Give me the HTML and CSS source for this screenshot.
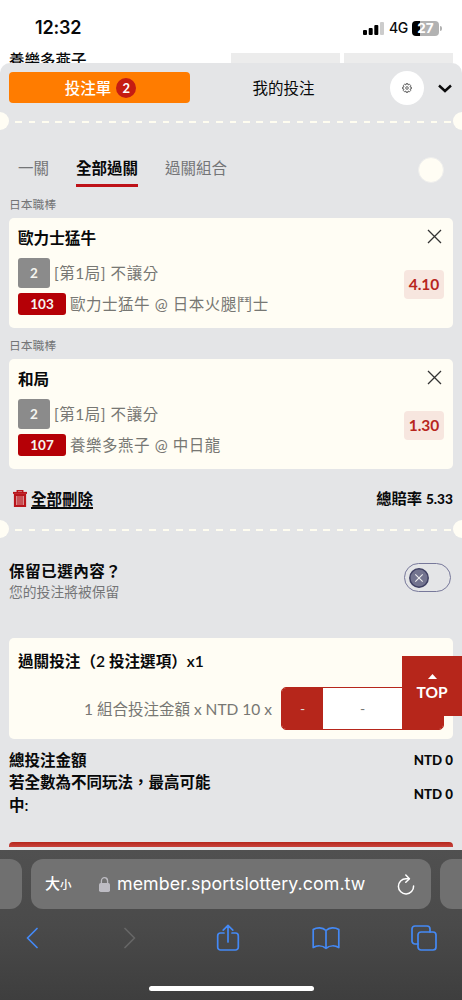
FILE: index.html
```html
<!DOCTYPE html>
<html lang="zh-Hant">
<head>
<meta charset="utf-8">
<meta name="viewport" content="width=device-width, initial-scale=1">
<title>投注單</title>
<link rel="stylesheet" href="styles.css">
</head>
<body>
<header class="status">
  <span class="time">12:32</span>
  <div class="signals">
    <svg class="bars" width="21" height="13" viewBox="0 0 21 13"><rect x="0" y="8" width="4" height="5" rx="1"/><rect x="5.7" y="6" width="4" height="7" rx="1"/><rect x="11.3" y="3" width="4" height="10" rx="1"/><rect class="dim" x="17" y="0" width="4" height="13" rx="1"/></svg>
    <span class="network">4G</span>
    <span class="battery">27</span><i class="battery-tip"></i>
  </div>
</header>
<div class="behind"><span class="behind-team">養樂多燕子</span><i class="behind-odds"></i><i class="behind-odds"></i></div>
<main class="sheet">
  <nav class="head">
    <div class="slip">投注單<b class="count">2</b></div>
    <div class="mine">我的投注</div>
    <div class="gear"><svg width="10" height="10" viewBox="0 0 20 20" fill="none" stroke="#555" stroke-width="1.8"><path d="M8 4 8.500 1h3L12 4l3-1.500 2.300 2.300L16 8l3 .5v3l-3 .5 1.300 3.200L15 17.500 12 16l-.5 3h-3L8 16l-3 1.500-2.300-2.300L4 12l-3-.5v-3L4 8 2.700 4.800 5 2.500z"/><circle cx="10" cy="10" r="2.600"/></svg></div>
    <svg class="chevron" width="14" height="9" viewBox="0 0 14 9" fill="none" stroke="#0b0b0c" stroke-width="2.4"><path d="M1 1.5 7 7l6-5.5"/></svg>
  </nav>
  <div class="tear"><i class="notch"></i><i class="dashes"></i><i class="notch"></i></div>
  <nav class="tabs"><span class="tab">一關</span><span class="tab active">全部過關</span><span class="tab">過關組合</span><i class="dot"></i></nav>
  <section class="pick">
    <h2 class="league">日本職棒</h2>
    <div class="card">
      <div class="pick-top"><h3 class="title">歐力士猛牛</h3><svg class="close" width="15" height="15" viewBox="0 0 15 15"><path d="m1 1 13 13M14 1 1 14"/></svg></div>
      <div class="pick-body">
        <div class="details"><p class="market"><b class="leg">2</b>[第1局] 不讓分</p><p class="match"><b class="code">103</b>歐力士猛牛 @ 日本火腿鬥士</p></div>
        <strong class="odds">4.10</strong>
      </div>
    </div>
  </section>
  <section class="pick">
    <h2 class="league">日本職棒</h2>
    <div class="card">
      <div class="pick-top"><h3 class="title">和局</h3><svg class="close" width="15" height="15" viewBox="0 0 15 15"><path d="m1 1 13 13M14 1 1 14"/></svg></div>
      <div class="pick-body">
        <div class="details"><p class="market"><b class="leg">2</b>[第1局] 不讓分</p><p class="match"><b class="code">107</b>養樂多燕子 @ 中日龍</p></div>
        <strong class="odds">1.30</strong>
      </div>
    </div>
  </section>
  <div class="summary">
    <svg width="14" height="17" viewBox="0 0 14 17" fill="none" stroke="#b9151b"><path d="M0 2.900h14" stroke-width="2"/><path d="M4.300 2.500V.8h5.400v1.700" stroke-width="1.500"/><path d="M2 5v11h10V5z" stroke-width="2.200" fill="#dc9a9c"/><path d="M5 6v9M7 6v9M9 6v9" stroke-width="1.100"/></svg>
    <a class="clear">全部刪除</a><span class="total-odds">總賠率 <b class="rate">5.33</b></span>
  </div>
  <div class="tear"><i class="notch"></i><i class="dashes"></i><i class="notch"></i></div>
  <section class="keep">
    <div class="keep-text"><h3 class="keep-title">保留已選內容？</h3><p class="keep-note">您的投注將被保留</p></div>
    <div class="switch"><svg class="knob" width="20" height="20" viewBox="0 0 20 20"><circle cx="10" cy="10" r="9.2" fill="#73748f" stroke="#3f4063" stroke-width="1.5"/><path d="m6.3 6.3 7.4 7.4m0-7.4-7.4 7.4" stroke="#eee" stroke-width="1.1"/></svg></div>
  </section>
  <section class="stake">
    <h3 class="stake-title">過關投注（2 投注選項）x1</h3>
    <div class="stake-row"><span class="formula">1 組合投注金額 x NTD 10 x</span><div class="stepper"><span class="minus">-</span><span class="amount">-</span><span class="plus"></span></div></div>
    <div class="to-top"><svg width="9" height="5" viewBox="0 0 9 5"><path d="M4.5 0 9 5H0z" fill="#fff"/></svg>TOP</div>
  </section>
  <div class="totals">
    <div class="total"><span>總投注金額</span><b class="money">NTD 0</b></div>
    <div class="total"><span class="maximum">若全數為不同玩法，最高可能中:</span><b class="money">NTD 0</b></div>
  </div>
  <div class="submit"></div>
</main>
<footer class="browser">
  <div class="address-row">
    <i class="side-tab left"></i>
    <div class="address"><span class="size">大<small class="small">小</small></span>
      <svg class="lock" width="11" height="15" viewBox="0 0 11 15"><path d="M2.4 7V4.2a3.1 3.5 0 0 1 6.2 0V7" fill="none" stroke="#bdbcc3" stroke-width="1.3"/><rect y="6" width="11" height="9" rx="1.7" fill="#bdbcc3"/></svg>
      <span class="url">member.sportslottery.com.tw</span>
      <svg class="reload" width="18" height="21" viewBox="0 0 18 21" fill="none" stroke="#fff" stroke-width="1.5" stroke-linecap="round" stroke-linejoin="round"><path d="M12 4.700H9A7.600 7.600 0 1 0 16.600 12"/><path d="m8.800 1 3.600 3.700-3.600 3.600"/></svg>
    </div>
    <i class="side-tab right"></i>
  </div>
  <nav class="tools">
    <svg width="12" height="22" viewBox="0 0 12 22"><path d="M11 1.5 1.5 11l9.5 9.5"/></svg>
    <svg class="disabled" width="12" height="22" viewBox="0 0 12 22"><path d="m1 1.5 9.5 9.5L1 20.5"/></svg>
    <svg width="24" height="28" viewBox="0 0 24 28"><path d="M8 9H4.5A2.8 2.8 0 0 0 1.7 11.8v11.4A2.8 2.8 0 0 0 4.5 26h15a2.8 2.8 0 0 0 2.8-2.8V11.8A2.8 2.8 0 0 0 19.5 9H16M12 18V1.5M7.2 6.2 12 1.4l4.8 4.8"/></svg>
    <svg width="28" height="24" viewBox="0 0 28 24"><path d="M14 4.500C10.500 1.200 5 1.200 1.200 3.500v18c4-2.300 9.300-2 12.800.8 3.500-2.800 8.800-3.100 12.800-.8v-18C23 1.200 17.500 1.200 14 4.500zv17.800"/></svg>
    <svg width="26" height="26" viewBox="0 0 26 26"><rect x="7" y="7" width="18" height="18" rx="3"/><path d="M7 19H4a3 3 0 0 1-3-3V4a3 3 0 0 1 3-3h12a3 3 0 0 1 3 3v3"/></svg>
  </nav>
  <i class="home"></i>
</footer>
</body>
</html>
```
FILE: styles.css
```css
* { box-sizing: border-box; }
body { margin: 0; width: 462px; height: 1000px; overflow: hidden; background: #fff; color: #08090a; font: 15.5px/22px Lato, "Noto Sans CJK TC", sans-serif; display: flex; flex-direction: column; }
h2, h3, p { margin: 0; }
i { display: block; }
svg { flex: none; display: block; }
.status { flex: none; height: 48px; padding: 8px 20px 0 35px; display: flex; align-items: center; justify-content: space-between; font-family: Inter, sans-serif; }
.time { font-size: 18px; font-weight: 600; letter-spacing: -.2px; }
.signals { display: flex; align-items: center; }
.bars { margin-right: 5px; }
.bars .dim { fill: #ccc; }
.network { font-size: 14px; font-weight: 500; margin-right: 5px; width: 18px; letter-spacing: -.4px; }
.battery { width: 27px; height: 15px; border-radius: 4px; background: linear-gradient(90deg, #000 8px, #b2b2b2 8px); color: #fff; font-size: 13.5px; font-weight: 700; line-height: 15px; text-align: center; }
.battery-tip { width: 2px; height: 5px; margin-left: 1px; border-radius: 0 2px 2px 0; background: #b2b2b2; }
.behind { flex: none; height: 15px; padding: 0 9px; display: flex; gap: 4px; overflow: hidden; }
.behind-team { width: 218px; font-weight: 500; line-height: 25px; }
.behind-odds { flex: 1; margin-top: 5px; background: #ececec; }
.sheet { flex: none; height: 787px; background: #e4e5e7; border-radius: 10px 10px 0 0; display: flex; flex-direction: column; }
.head { flex: none; height: 49px; padding: 0 10px 0 9px; display: flex; align-items: center; }
.slip { width: 181px; height: 31px; border-radius: 4px; background: #ff7c00; color: #fff; font-weight: 500; display: flex; align-items: center; justify-content: center; gap: 5px; padding-left: 2px; }
.count { width: 20px; height: 20px; border-radius: 50%; background: #c51c12; font-size: 13px; line-height: 20px; text-align: center; }
.mine { width: 187px; text-align: center; }
.gear { margin-left: 13px; width: 34px; height: 34px; border-radius: 50%; background: #fff; display: grid; place-items: center; }
.chevron { margin-left: 14px; margin-top: 2px; }
.tear { flex: none; height: 18px; display: flex; align-items: center; justify-content: space-between; }
.notch { width: 9px; height: 18px; border-radius: 0 9px 9px 0; background: #fffdf4; }
.notch:last-child { border-radius: 9px 0 0 9px; }
.dashes { width: 436px; height: 2px; margin: 2px 0 0 4px; background: repeating-linear-gradient(90deg, transparent 0 .2px, #fffdf0 .2px 6.900px, transparent 6.900px 13.400px); }
.dashes { margin-left: 3px; }
.tabs { flex: none; height: 57px; padding: 21px 18px 0; display: flex; align-items: flex-start; gap: 27px; color: #747577; }
.tab { height: 36px; padding-top: 6px; }
.active { color: #08090a; font-weight: 700; border-bottom: 3px solid #be1118; }
.dot { margin: 6px 0 0 auto; width: 26px; height: 26px; border-radius: 50%; background: #fffdf4; border: 1px solid #eeeeed; }
.pick { flex: none; height: 141px; padding: 8px 9px 0; }
.league { font-size: 11.800px; font-weight: 400; line-height: 19px; color: #737476; height: 23px; }
.card { height: 110px; padding: 9px; border-radius: 5px; background: #fffdf4; }
.pick-top { height: 22px; display: flex; align-items: center; justify-content: space-between; }
.title, .keep-title, .stake-title { font-size: 15.600px; font-weight: 600; }
.close { fill: none; stroke: #333; stroke-width: 1.3; margin: -4px 2px 0 0; }
.pick-body { padding-top: 9px; display: flex; justify-content: space-between; }
.details { color: #777773; letter-spacing: .53px; }
.market, .match { display: flex; align-items: center; gap: 4px; }
.market { height: 30px; }
.match { height: 22px; margin-top: 5px; }
.leg, .code { border-radius: 3px; color: #f5f5f0; text-align: center; font-size: 13.500px; letter-spacing: 0; }
.leg { width: 32px; height: 30px; line-height: 31px; background: #8b8b8b; }
.code { width: 48px; height: 22px; line-height: 23px; background: #b50006; }
.odds { align-self: flex-start; margin-top: 12px; width: 40px; height: 29px; border-radius: 4px; background: #f7e6df; color: #b8261e; font-size: 15.500px; line-height: 29px; text-align: center; }
.summary { flex: none; height: 51px; padding: 8px 9px 0 13px; display: flex; align-items: center; font-weight: 600; }
.clear { margin-left: 4px; text-decoration: underline; text-underline-offset: 2px; text-decoration-thickness: 1.500px; }
.total-odds { margin-left: auto; font-size: 15.300px; }
.rate { font-size: 13.700px; }
.keep { flex: none; height: 100px; padding: 22px 11px 0 9px; display: flex; justify-content: space-between; }
.keep-title { letter-spacing: .45px; }
.keep-note { color: #747577; font-size: 13.800px; line-height: 20px; }
.switch { width: 47px; height: 29px; margin-top: 3px; border: 1px solid #77789a; border-radius: 15px; padding: 3.500px; }
.stake { position: relative; flex: none; height: 101px; margin: 0 9px; padding: 12px 9px 9px; background: #fffdf4; border-radius: 5px; }
.stake-title { height: 37px; }
.stake-row { display: flex; justify-content: flex-end; align-items: center; gap: 9px; color: #777773; }
.stepper { width: 163px; height: 43px; border: 1px solid #b6261b; border-radius: 5px; display: grid; grid-template-columns: 41px 1fr 41px; line-height: 41px; text-align: center; overflow: hidden; font-size: 14px; }
.minus, .plus { background: #b6261b; color: #ddd; }
.amount { background: #fff; }
.to-top { position: absolute; right: -9px; top: 18px; width: 60px; height: 60px; background: #b6261b; color: #fff; font-weight: 700; line-height: 20px; display: flex; flex-direction: column; align-items: center; padding-top: 18px; gap: 3px; }
.totals { flex: none; height: 103px; padding: 10px 9px 0; font-weight: 600; }
.total { display: flex; align-items: center; justify-content: space-between; }
.maximum { width: 210px; line-height: 22.500px; }
.money { font-size: 13.300px; }
.submit { flex: none; height: 5px; margin: 0 9px; border-radius: 4px 4px 0 0; background: linear-gradient(#b6261b, #c7433d); }
.browser { flex: none; height: 150px; padding-top: 9px; background: linear-gradient(#505050, #4a4a4a 50%, #3e3e3e); color: #fff; font-family: Inter, "Noto Sans CJK TC", sans-serif; }
.address-row { display: flex; justify-content: space-between; }
.side-tab { width: 22px; height: 50px; background: #707070; border-radius: 0 12px 12px 0; }
.right { border-radius: 12px 0 0 12px; }
.address { width: 400px; height: 50px; border-radius: 12px; background: #727272; padding: 0 16px 0 14px; display: flex; align-items: center; }
.size { width: 54px; font-size: 15px; font-weight: 500; }
.small { font-size: 11.500px; }
.url { margin-left: 7px; font-size: 17.800px; letter-spacing: .08px; white-space: nowrap; }
.reload { margin-left: auto; }
.tools { width: 490px; height: 58px; margin-left: -17px; display: grid; grid-template-columns: repeat(5, 98px); align-items: center; justify-items: center; }
.tools svg { fill: none; stroke: #4489f5; stroke-width: 1.700; stroke-linecap: round; stroke-linejoin: round; }
.tools .disabled { stroke: #666; }
.home { width: 165px; height: 5px; margin: 19px auto 0; background: #fff; border-radius: 3px; }
```
